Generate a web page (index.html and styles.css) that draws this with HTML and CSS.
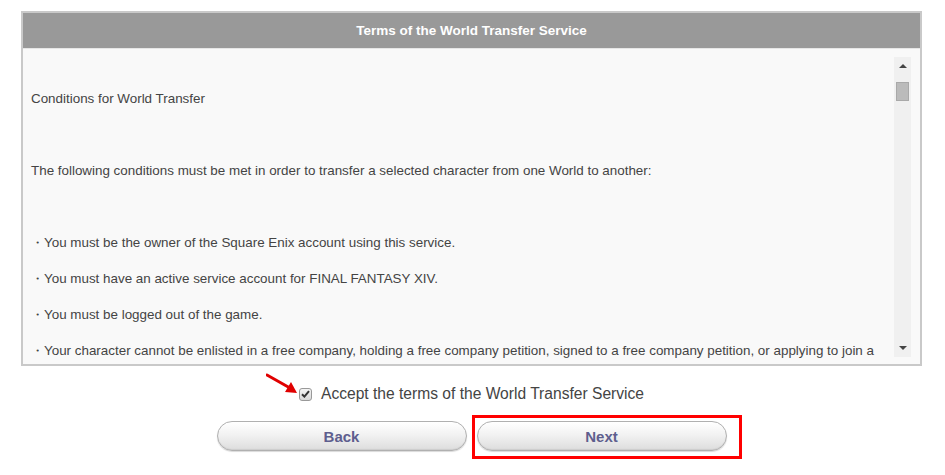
FILE: index.html
```html
<!DOCTYPE html>
<html>
<head>
<meta charset="utf-8">
<link rel="stylesheet" href="styles.css">
</head>
<body>
<div class="page">
  <div class="terms">
    <div class="terms-head">Terms of the World Transfer Service</div>
    <div class="terms-body">
      <div class="terms-text">
        <p>Conditions for World Transfer</p>
        <p class="blank">&nbsp;</p>
        <p>The following conditions must be met in order to transfer a selected character from one World to another:</p>
        <p class="blank">&nbsp;</p>
        <p>・You must be the owner of the Square Enix account using this service.</p>
        <p>・You must have an active service account for FINAL FANTASY XIV.</p>
        <p>・You must be logged out of the game.</p>
        <p>・Your character cannot be enlisted in a free company, holding a free company petition, signed to a free company petition, or applying to join a free company.</p>
        <p>・Your character cannot be a member of a linkshell.</p>
      </div>
      <div class="scrollbar">
        <div class="sb-arrow sb-up"></div>
        <div class="sb-track"><div class="sb-thumb"></div></div>
        <div class="sb-arrow sb-down"></div>
      </div>
    </div>
  </div>

  <div class="accept">
    <svg class="pointer" width="36" height="22" viewBox="0 0 36 22">
      <line x1="1" y1="2" x2="24" y2="15" stroke="#e00000" stroke-width="3" stroke-linecap="round"/>
      <polygon points="31,20 19,19 25,9" fill="#e00000"/>
    </svg>
    <span class="checkbox">
      <svg width="9" height="8" viewBox="0 0 9 8"><path d="M1 4.2 L3.4 6.6 L8 1.2" fill="none" stroke="#333" stroke-width="2"/></svg>
    </span>
    <span class="accept-label">Accept the terms of the World Transfer Service</span>
  </div>

  <div class="buttons">
    <button class="btn">Back</button>
    <div class="next-wrap">
      <button class="btn">Next</button>
      <div class="highlight"></div>
    </div>
  </div>
</div>
</body>
</html>
```

FILE: styles.css
```css
html, body {
  margin: 0;
  padding: 0;
  background: #ffffff;
}
body {
  min-height: 475px;
}
.page {
  padding: 11px 0 23px 21px;
  width: 901px;
  font-family: "Liberation Sans", Arial, sans-serif;
}
.terms {
  width: 897px;
  border: 2px solid #c9c9c9;
  background: #f9f9f9;
}
.terms-head {
  height: 35px;
  line-height: 35px;
  background: #999999;
  color: #ffffff;
  font-weight: bold;
  font-size: 13.5px;
  text-align: center;
  border-bottom: 1px solid #e6e6e6;
}
.terms-body {
  display: flex;
  height: 315px;
  overflow: hidden;
}
.terms-text {
  flex: 1;
  padding: 32px 10px 0 8px;
  color: #444444;
  font-size: 13.4px;
  overflow: hidden;
}
.terms-text p {
  margin: 0;
  line-height: 36px;
}
.scrollbar {
  width: 17px;
  margin: 8px 9px 7px 0;
  background: #f0f0f0;
  display: flex;
  flex-direction: column;
  align-items: center;
}
.sb-arrow {
  width: 0;
  height: 0;
  border-left: 4px solid transparent;
  border-right: 4px solid transparent;
}
.sb-up {
  margin-top: 7px;
  border-bottom: 4px solid #444;
}
.sb-down {
  margin-bottom: 7px;
  border-top: 4px solid #444;
}
.sb-track {
  flex: 1;
  width: 100%;
  display: flex;
  justify-content: center;
  padding-top: 14px;
}
.sb-thumb {
  width: 11px;
  height: 17px;
  background: #bbbbbb;
  border: 1px solid #a9a9a9;
}
.accept {
  position: relative;
  display: flex;
  align-items: center;
  justify-content: center;
  margin-top: 19px;
  height: 18px;
  gap: 9px;
}
.pointer {
  position: absolute;
  left: 245px;
  top: -12px;
}
.checkbox {
  width: 11px;
  height: 11px;
  border: 1px solid #999;
  border-radius: 3px;
  background: linear-gradient(#f4f4f4, #d8d8d8);
  display: flex;
  align-items: center;
  justify-content: center;
}
.accept-label {
  font-size: 15.6px;
  color: #444444;
}
.buttons {
  display: flex;
  justify-content: center;
  gap: 10px;
  margin-top: 18px;
}
.btn {
  width: 250px;
  height: 30px;
  border: 1px solid #b0b0b0;
  border-radius: 15px;
  background: linear-gradient(#ffffff 0%, #f2f2f2 45%, #dddddd 100%);
  box-shadow: inset 0 -1px 1px rgba(0,0,0,0.08), 0 1px 1px rgba(0,0,0,0.15);
  color: #5e5e8e;
  font-family: "Liberation Sans", Arial, sans-serif;
  font-weight: bold;
  font-size: 15px;
  padding: 0;
}
.next-wrap {
  position: relative;
}
.highlight {
  position: absolute;
  left: -5px;
  top: -6px;
  width: 264px;
  height: 38px;
  border: 3px solid #ff0000;
}
```
